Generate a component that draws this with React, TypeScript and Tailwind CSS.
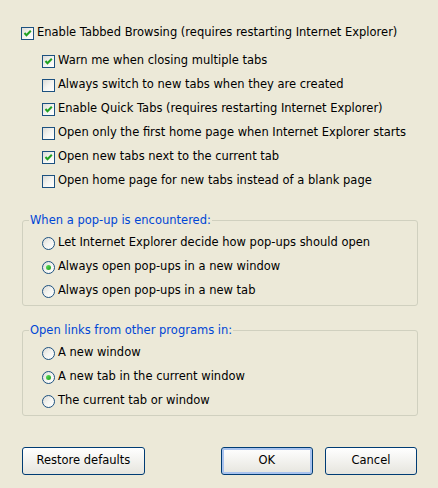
import React from "react";

const CheckBox: React.FC<{ checked?: boolean }> = ({ checked }) => (
  <span className="flex h-[13px] w-[13px] shrink-0 items-center justify-center border border-[#1C5180] bg-gradient-to-br from-[#DCDCD7] via-[#F4F4F0] to-white">
    {checked && (
      <svg width="9" height="9" viewBox="0 0 9 9">
        <path d="M1.5 4 L3.5 6.3 L7.8 1.8" stroke="#21A121" strokeWidth="2" fill="none" />
      </svg>
    )}
  </span>
);

const Radio: React.FC<{ checked?: boolean }> = ({ checked }) => (
  <span className="flex h-[13px] w-[13px] shrink-0 items-center justify-center rounded-full border border-[#1C5180] bg-gradient-to-br from-[#DCDCD7] via-[#F4F4F0] to-white">
    {checked && (
      <span className="h-[5px] w-[5px] rounded-full bg-gradient-to-br from-[#5BE35B] to-[#1E9A1E]" />
    )}
  </span>
);

const CheckRow: React.FC<{ checked?: boolean; label: string }> = ({ checked, label }) => (
  <div className="flex h-[24px] items-center gap-[3px]">
    <CheckBox checked={checked} />
    <span>{label}</span>
  </div>
);

const RadioRow: React.FC<{ checked?: boolean; label: string }> = ({ checked, label }) => (
  <div className="flex h-[24px] items-center gap-[3px]">
    <Radio checked={checked} />
    <span>{label}</span>
  </div>
);

const Group: React.FC<{ title: string; children: React.ReactNode; className?: string }> = ({
  title,
  children,
  className,
}) => (
  <fieldset className={"ml-[1px] w-[396px] rounded-[3px] border border-[#D0D0BF] " + (className ?? "")}>
    <legend className="ml-[6px] px-[1px] leading-[14px] text-[#0046D5]">{title}</legend>
    <div className="pb-[2px] pl-[19px] pt-[4px]">{children}</div>
  </fieldset>
);

const tabOptions = [
  { label: "Warn me when closing multiple tabs", checked: true },
  { label: "Always switch to new tabs when they are created", checked: false },
  { label: "Enable Quick Tabs (requires restarting Internet Explorer)", checked: true },
  { label: "Open only the first home page when Internet Explorer starts", checked: false },
  { label: "Open new tabs next to the current tab", checked: true },
  { label: "Open home page for new tabs instead of a blank page", checked: false },
];

export default function App() {
  return (
    <div className="h-[488px] w-[438px] bg-[#ECE9D8] px-[21px] pt-[21px] font-['DejaVu_Sans',sans-serif] text-[11.5px] text-black">
      <CheckRow checked label="Enable Tabbed Browsing (requires restarting Internet Explorer)" />
      <div className="mt-[4px] pl-[21px]">
        {tabOptions.map((o) => (
          <CheckRow key={o.label} checked={o.checked} label={o.label} />
        ))}
      </div>

      <Group title="When a pop-up is encountered:" className="mt-[20px]">
        <RadioRow label="Let Internet Explorer decide how pop-ups should open" />
        <RadioRow checked label="Always open pop-ups in a new window" />
        <RadioRow label="Always open pop-ups in a new tab" />
      </Group>

      <Group title="Open links from other programs in:" className="mt-[17px]">
        <RadioRow label="A new window" />
        <RadioRow checked label="A new tab in the current window" />
        <RadioRow label="The current tab or window" />
      </Group>

      <div className="mt-[31px] flex pl-[1px]">
        <button className="h-[28px] w-[124px] rounded-[3px] border border-[#003C74] bg-gradient-to-b from-white to-[#E6E5DE]">
          Restore defaults
        </button>
        <button className="ml-[76px] h-[28px] w-[93px] rounded-[3px] border border-[#003C74] bg-gradient-to-b from-white to-[#E6E5DE] shadow-[inset_0_0_0_2px_#A9C3EE]">
          OK
        </button>
        <button className="ml-[12px] h-[28px] w-[93px] rounded-[3px] border border-[#003C74] bg-gradient-to-b from-white to-[#E6E5DE]">
          Cancel
        </button>
      </div>
    </div>
  );
}
